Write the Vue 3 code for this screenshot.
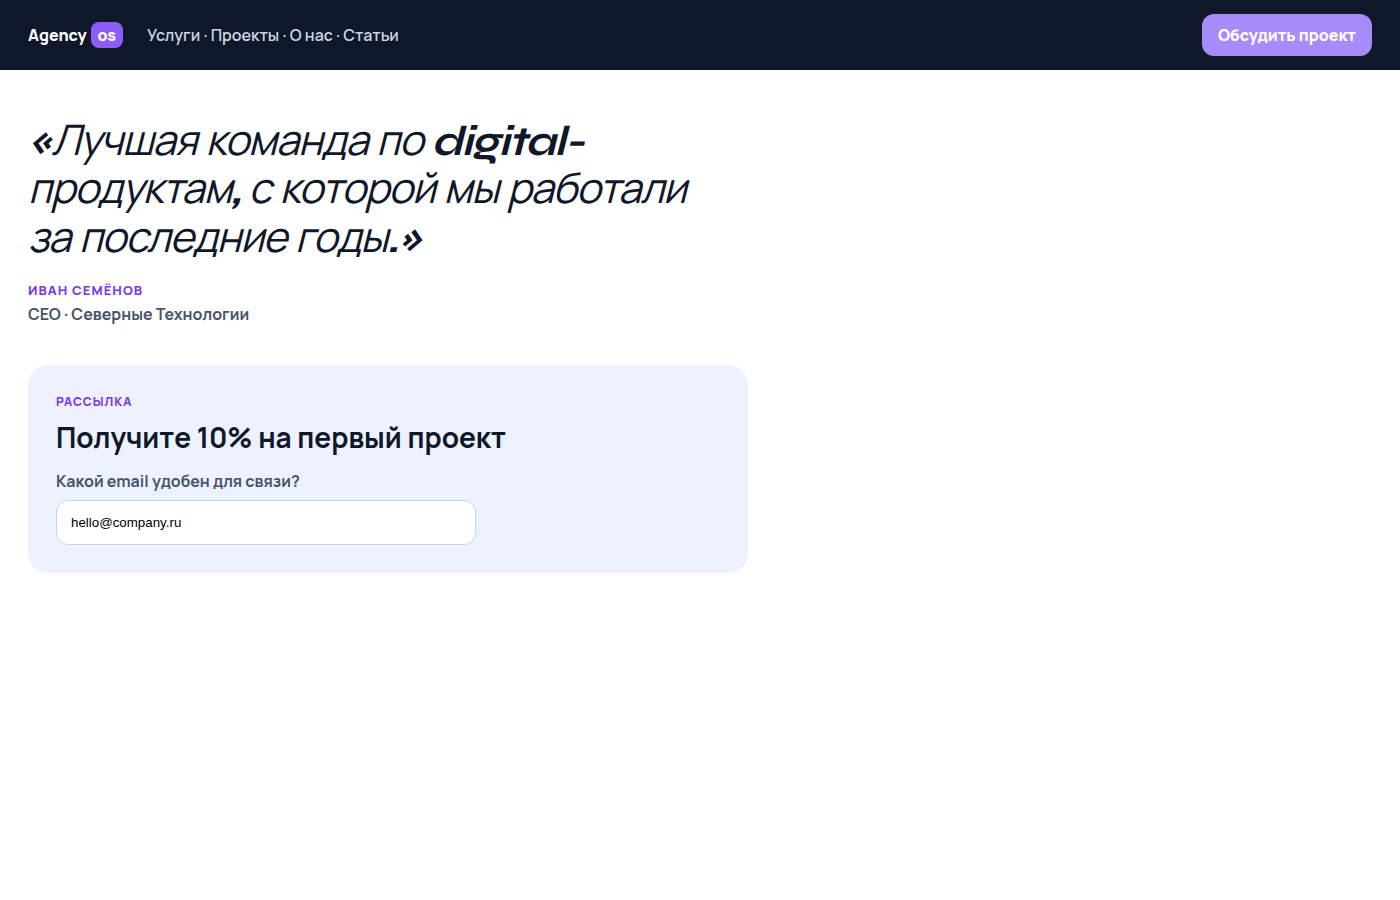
<script setup>
import { ref } from 'vue'

const email = ref('hello@company.ru')

const quote = '«Лучшая команда по digital-продуктам, с которой мы работали за последние годы.»'

// Cyrillic words are set light, Latin words and punctuation bold.
const parts = quote
  .match(/[а-яё]+|[^а-яё]+/gi)
  .map((text) => ({ text, light: /[а-яё]/i.test(text) }))
</script>

<template>
  <div class="page">
    <header class="header">
      <div class="brand">Agency <span class="badge">os</span></div>
      <nav class="nav" aria-label="Основное меню">
        <a href="#services">Услуги</a> · <a href="#projects">Проекты</a> · <a href="#about">О нас</a> · <a href="#articles">Статьи</a>
      </nav>
      <button class="cta" type="button">Обсудить проект</button>
    </header>

    <main class="main">
      <figure class="testimonial">
        <blockquote class="quote"><span v-for="(part, i) in parts" :key="i" :class="{ light: part.light }">{{ part.text }}</span></blockquote>
        <figcaption>
          <div class="author">Иван Семёнов</div>
          <div class="role">CEO · Северные Технологии</div>
        </figcaption>
      </figure>

      <form class="card" @submit.prevent>
        <div class="eyebrow">Рассылка</div>
        <h2 class="title">Получите 10% на первый проект</h2>
        <label class="label" for="email">Какой email удобен для связи?</label>
        <input id="email" v-model="email" class="input" type="email">
      </form>
    </main>
  </div>
</template>

<style>
body {
  margin: 0;
  background: #fff;
}
</style>

<style scoped>
.page {
  font-family: Manrope, Inter, "Noto Sans", sans-serif;
  font-size: 16px;
  line-height: 24px;
  color: #0f172a;
}

.header {
  display: flex;
  align-items: center;
  gap: 24px;
  padding: 14px 28px;
  background: #0f172a;
}

.brand {
  display: flex;
  align-items: center;
  gap: 4px;
  color: #fff;
  font-weight: 800;
}

.badge {
  padding: 1px 7px;
  border-radius: 8px;
  background: #8b5cf6;
}

.nav {
  color: #cbd5e1;
  font-weight: 600;
}

.nav a {
  color: inherit;
  text-decoration: none;
}

.cta {
  margin-left: auto;
  padding: 9px 16px;
  border: 0;
  border-radius: 12px;
  background: #a78bfa;
  color: #fff;
  font: inherit;
  font-weight: 800;
  cursor: pointer;
}

.main {
  max-width: 720px;
  padding: 48px 28px;
}

.testimonial {
  margin: 0 0 39px;
}

.quote {
  max-width: 700px;
  margin: 0 0 17px;
  font-family: Syne, Manrope, Inter, sans-serif;
  font-size: 42px;
  font-style: italic;
  font-weight: 700;
  line-height: 1.15;
  letter-spacing: -0.03em;
}

.light {
  font-weight: 400;
}

.author,
.eyebrow {
  color: #7c3aed;
  font-weight: 800;
  letter-spacing: 0.08em;
  text-transform: uppercase;
}

.author {
  font-size: 13px;
  line-height: 20px;
}

.role {
  margin-top: 2px;
  color: #475569;
  font-weight: 700;
}

.card {
  padding: 28px;
  border-radius: 20px;
  background: #eef2ff;
}

.eyebrow {
  font-size: 12px;
  line-height: 18px;
}

.title {
  margin: 8px 0 14px;
  font-size: 28px;
  font-weight: 700;
  line-height: 36px;
}

.label {
  display: block;
  margin-bottom: 7px;
  color: #475569;
  font-weight: 700;
}

.input {
  display: block;
  box-sizing: border-box;
  width: 100%;
  max-width: 420px;
  padding: 14px;
  border: 1px solid #cbd5e1;
  border-radius: 12px;
  background: #fff;
  color: #000;
  font-family: "Liberation Sans", Arial, sans-serif;
}
</style>
